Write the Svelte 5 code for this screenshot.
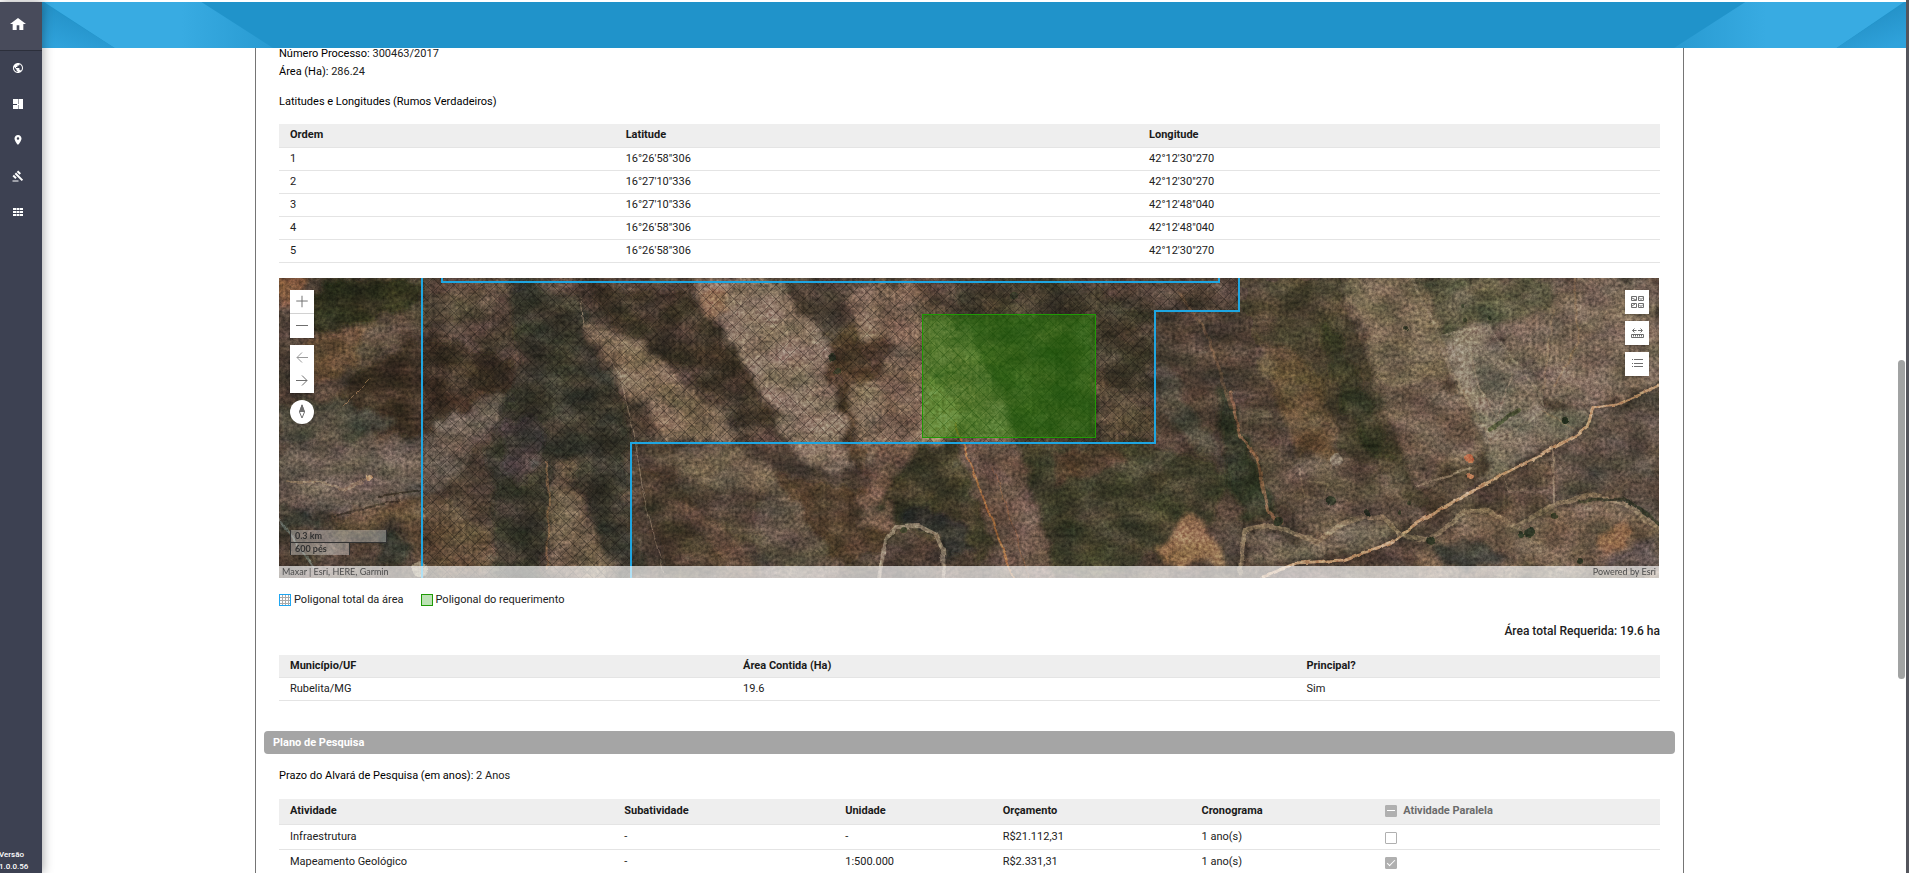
<script>
  const menu = [
    { name: 'Mapa', d: 'M12 2C6.48 2 2 6.48 2 12s4.48 10 10 10 10-4.480 10-10S17.520 2 12 2zm-1 17.930c-3.950-.49-7-3.850-7-7.930 0-.62.08-1.210.21-1.790L9 15v1c0 1.100.9 2 2 2v1.930zm6.900-2.540c-.26-.81-1-1.390-1.900-1.390h-1v-3c0-.55-.45-1-1-1H8v-2h2c.55 0 1-.45 1-1V7h2c1.100 0 2-.9 2-2v-.41c2.930 1.190 5 4.060 5 7.410 0 2.080-.8 3.970-2.100 5.390z' },
    { name: 'Painel', d: 'M2 2h11v10H2zM2 14h11v8H2zM14 2h8v20h-8zM10 12h4v2h-4z' },
    { name: 'Localização', d: 'M12 2C8.13 2 5 5.13 5 9c0 5.250 7 13 7 13s7-7.750 7-13c0-3.870-3.130-7-7-7zm0 9.500a2.500 2.500 0 010-5 2.500 2.500 0 010 5z' },
    { name: 'Leilão', d: 'M1 21h12v2H1zM5.245 8.070l2.830-2.827 14.140 14.142-2.828 2.828zM12.317 1l5.657 5.656-2.830 2.830-5.654-5.660zM3.825 9.485l5.657 5.657-2.828 2.828-5.657-5.657z' },
    { name: 'Aplicações', d: 'M2 4h6v4H2zM9 4h6v4H9zM16 4h6v4h-6zM2 10h6v4H2zM9 10h6v4H9zM16 10h6v4h-6zM2 16h6v4H2zM9 16h6v4H9zM16 16h6v4h-6z' }
  ];
  const coords = [
    ['1', '16°26\'58"306', '42°12\'30"270'],
    ['2', '16°27\'10"336', '42°12\'30"270'],
    ['3', '16°27\'10"336', '42°12\'48"040'],
    ['4', '16°26\'58"306', '42°12\'48"040'],
    ['5', '16°26\'58"306', '42°12\'30"270']
  ];
  const activities = [
    { name: 'Infraestrutura', sub: '-', unit: '-', cost: 'R$21.112,31', time: '1 ano(s)', parallel: false },
    { name: 'Mapeamento Geológico', sub: '-', unit: '1:500.000', cost: 'R$2.331,31', time: '1 ano(s)', parallel: true }
  ];
  // Land cover patches: [points, fill, opacity]
  const land = [
    ['0,0 30,0 8,32 0,30', '#7a5238', 1],
    ['40,0 150,0 140,30 80,50 50,70 30,40', '#2f2d1c', 1],
    ['60,50 140,28 200,0 260,0 200,30 120,62 70,70', '#5c4c3d', 0.9],
    ['30,60 90,45 80,80 55,105 20,110', '#644b34', 0.9],
    ['75,95 150,60 230,80 240,110 170,140 140,160 80,150 60,120', '#382c22', 0.9],
    ['0,130 60,120 120,145 60,170 0,168', '#4e483a', 1],
    ['0,172 60,165 140,160 220,110 235,125 200,165 180,200 150,215 110,225 60,235 0,225', '#6b5e52', 0.85],
    ['0,225 30,225 45,255 20,255 0,250', '#3a3a32', 1],
    ['50,240 150,215 180,230 210,260 205,300 150,300 120,240 60,260', '#5f4a35', 0.85],
    ['100,258 115,255 135,265 132,290 95,290', '#30322a', 1],
    ['230,0 300,20 310,60 350,130 345,220 370,300 330,300 305,210 280,185 260,300 210,300 215,230 205,170 225,130 240,80', '#38352c', 0.95],
    ['225,140 265,145 260,190 240,210 225,190', '#443c3e', 0.6],
    ['305,42 350,62 390,88 405,110 440,130 462,150 455,165 400,164 370,140 345,110 325,75', '#79654f', 1],
    ['272,185 290,186 300,215 312,245 335,290 335,300 268,300 270,230', '#6e5c48', 0.9],
    ['310,10 400,10 430,40 470,90 490,140 465,148 400,88 340,55', '#3e3226', 1],
    ['410,0 480,0 500,10 540,50 550,80 565,110 562,170 590,190 545,196 520,180 500,140 480,110 455,60 430,35', '#8a7564', 0.95],
    ['418,10 445,10 450,35 430,40', '#936f57', 1],
    ['570,10 645,5 660,30 705,75 725,140 740,165 640,165 600,190 590,165 600,110 580,70', '#7a6252', 0.95],
    ['545,60 570,55 610,60 605,95 580,115 570,150 600,190 593,205 572,180 562,130 550,100', '#493728', 0.95],
    ['500,0 560,0 570,20 545,60 520,30', '#4a3c30', 1],
    ['572,105 603,108 600,150 592,190 582,170 574,135', '#806a57', 0.9],
    ['600,170 640,165 615,200 602,220 585,210', '#6b5142', 0.9],
    ['395,178 410,170 440,170 480,180 505,195 480,215 440,205 400,195', '#7b6955', 0.7],
    ['355,185 395,200 420,230 460,260 480,300 395,300 370,240', '#45382a', 1],
    ['400,225 430,240 470,270 480,300 440,280 420,250', '#7b614a', 0.6],
    ['490,190 520,200 590,210 600,230 620,250 600,275 560,285 530,250 500,220', '#4d3b2b', 1],
    ['491,200 520,230 560,290 560,300 480,300 480,230', '#5c5044', 0.9],
    ['575,220 600,215 615,248 600,258 588,245', '#826450', 0.8],
    ['640,165 680,165 715,270 700,290 660,260 620,250 600,225', '#3c3728', 1],
    ['620,240 640,230 665,235 685,250 695,275 670,280 660,258 635,248', '#292c28', 1],
    ['676,165 735,162 750,200 775,290 778,300 728,300', '#655042', 1],
    ['646,100 670,115 685,155 660,165 644,162', '#a58b6a', 0.9],
    ['670,0 780,0 876,40 876,165 735,165 720,110 690,60', '#40372a', 0.9],
    ['740,165 876,165 960,200 930,240 880,280 800,300 778,300 755,210', '#403e29', 1],
    ['770,175 830,165 850,180 800,200 775,205', '#543a2a', 0.7],
    ['817,100 850,120 875,135 870,160 817,160', '#5d4a3a', 0.8],
    ['877,83 900,95 905,120 940,170 955,200 920,170 895,140 877,130', '#4d4638', 0.9],
    ['877,268 908,234 925,245 950,285 885,283', '#94704f', 1],
    ['960,0 1062,0 1080,60 1110,130 1135,205 1150,235 1110,225 1060,160 1010,130 975,70', '#48412d', 1],
    ['978,60 1010,70 1040,100 1050,140 1060,175 1020,180 1000,130', '#634d33', 0.8],
    ['1040,40 1060,50 1085,110 1115,180 1095,180 1060,120', '#33331f', 0.9],
    ['940,110 955,120 985,190 1000,240 960,240 951,200 940,150', '#2e3021', 1],
    ['951,120 980,130 1010,190 1055,175 1110,200 1145,240 1100,262 1040,255 1010,240 985,200', '#5e4f41', 1],
    ['1064,0 1132,0 1165,60 1175,110 1210,165 1215,170 1140,208 1111,132 1084,62', '#76664f', 1],
    ['1100,110 1170,100 1205,155 1140,205', '#665444', 0.8],
    ['1135,0 1275,0 1273,32 1205,47 1165,55 1150,30', '#59543d', 0.95],
    ['1165,58 1208,47 1262,118 1265,135 1215,165 1185,125', '#827563', 1],
    ['1190,75 1232,90 1255,130 1215,140 1195,105', '#6b6251', 1],
    ['1270,0 1380,0 1380,105 1315,128 1262,120 1212,48 1273,32', '#746453', 1],
    ['1264,132 1314,130 1308,149 1200,205 1200,180', '#746959', 1],
    ['1140,208 1215,172 1200,205 1148,240', '#4c3c2f', 1],
    ['1314,135 1380,110 1380,250 1330,225 1300,215 1275,230 1275,172', '#584b40', 1],
    ['1225,200 1272,178 1274,225 1235,245', '#5f4d3c', 1],
    ['970,255 1040,265 1085,240 1115,258 1060,278 1000,285 965,285', '#6d5f50', 1],
    ['1155,262 1195,235 1240,245 1280,230 1340,218 1380,250 1380,300 1120,300', '#6d5a47', 1],
    ['1160,270 1185,262 1220,270 1235,288 1160,288', '#3e3b30', 1],
    ['1318,252 1348,250 1345,268 1320,276', '#8d6547', 1],
    ['1330,280 1380,255 1380,290 1320,290', '#574a44', 1]
  ];
  // Tracks, creeks and field edges: [path, colour, width, opacity]
  const tracks = [
    ['M984 299L1018 285 1064 282 1111 265 1138 245 1191 214 1271 172 1300 156 1308 149 1314 130 1338 127 1380 107', '#bd9670', 3, 1],
    ['M961 295L966 252 990 247 1038 264 1066 244 1085 238 1105 240 1121 256 1148 262 1168 250 1186 233 1208 232 1238 249 1271 229 1310 217 1345 225 1378 249', '#927b60', 5, 0.75],
    ['M676 145L691 185 712 240 735 300', '#ad7243', 2, 0.9],
    ['M714 190L735 250 750 300', '#8f5f42', 1, 0.7],
    ['M600 300L606 262 617 249 640 248 656 256 664 272 665 300', '#988770', 4, 0.8],
    ['M302 20L305 48 340 95 355 155 365 220 385 295', '#8a7560', 1, 0.8],
    ['M951 115L960 155 978 180 990 235 1003 245', '#97694a', 3, 0.7],
    ['M1132 0L1155 45 1170 90 1205 150 1212 162', '#8c7b64', 3, 0.7],
    ['M1163 58L1208 47 1262 118 1266 132 1218 164', '#8c7d6a', 3, 0.7],
    ['M1190 70L1200 110 1218 140 1234 95', '#8e7e69', 2, 0.8],
    ['M1295 0L1300 65 1275 108', '#8b7156', 2, 0.7],
    ['M1275 32L1264 110 M1264 132L1293 150', '#927b61', 2, 0.6],
    ['M1138 208L1192 190 M1274 170L1275 224', '#9c876d', 2, 0.6],
    ['M1225 200L1230 213 1270 213', '#907b62', 1, 0.7],
    ['M60 212L90 200 M8 204L40 204 64 212 84 205', '#9c8468', 2, 0.6],
    ['M64 128L90 102', '#9c7854', 1, 0.7],
    ['M1020 190L1025 218 1045 222 1048 205 1030 203', '#7b6853', 2, 0.8],
    ['M900 15L925 50 940 90 952 130', '#8a6545', 3, 0.4],
    ['M0 240L10 255 35 290', '#7c8079', 2, 0.7],
    ['M267 185L270 220 268 290', '#8e6846', 2, 0.6],
    ['M100 218L143 212 M55 238L120 222', '#332c20', 2, 0.8],
    ['M1210 152L1240 132', '#3c4424', 4, 0.7],
    ['M1300 223L1345 221 1362 232 1380 245', '#333426', 3, 0.9]
  ];
  const clumps = [[1251, 255, 5], [1242, 256, 3], [1275, 238, 3], [1301, 283, 3], [1152, 263, 5], [1089, 235, 3], [1052, 223, 4], [1286, 142, 3], [1186, 42, 2], [1184, 28, 2], [1210, 40, 2], [1126, 50, 2], [1120, 235, 2], [1130, 225, 2], [1000, 243, 4], [553, 80, 4], [558, 93, 3], [625, 252, 3], [735, 18, 4]];
</script>

<div class="shell">
  <nav class="sidebar" aria-label="Principal">
    <a class="home" href="#inicio" aria-label="Início">
      <svg viewBox="0 0 24 24"><path d="M10 21v-7h4v7h6v-9h4L12 3 0 12h4v9z" /></svg>
    </a>
    <div class="menu">
      {#each menu as item}
        <a href="#menu" aria-label={item.name}><svg viewBox="0 0 24 24"><path d={item.d} /></svg></a>
      {/each}
    </div>
    <div class="version">Versão<br />1.0.0.56</div>
  </nav>

  <div class="main">
    <header>
      <svg class="stripe" viewBox="0 0 230 46" preserveAspectRatio="none" aria-hidden="true">
        <defs>
          <linearGradient id="fold-l" x1="0.7" y1="0.3" x2="0.3" y2="1"><stop offset="0" stop-color="#2390c6" /><stop offset="1" stop-color="#2fa2db" /></linearGradient>
          <linearGradient id="band-l"><stop offset="0.6" stop-color="#38abe2" /><stop offset="1" stop-color="#289ad1" /></linearGradient>
        </defs>
        <path d="M2 0H158L229 46H72z" fill="url(#band-l)" />
        <path d="M0 0L72 46H0z" fill="url(#fold-l)" />
      </svg>
      <svg class="stripe" viewBox="0 0 234 46" preserveAspectRatio="none" aria-hidden="true">
        <defs>
          <linearGradient id="fold-r" x1="0.3" y1="0.3" x2="0.7" y2="1"><stop offset="0" stop-color="#2390c6" /><stop offset="1" stop-color="#2fa2db" /></linearGradient>
          <linearGradient id="band-r"><stop offset="0" stop-color="#289ad1" /><stop offset="0.4" stop-color="#38abe2" /></linearGradient>
        </defs>
        <path d="M72 0H232L164 46H0z" fill="url(#band-r)" />
        <path d="M234 0L164 46H234z" fill="url(#fold-r)" />
      </svg>
    </header>

    <div class="body">
      <main>
        <article>
          <div class="facts">
            <p><b>Número Processo:</b> 300463/2017</p>
            <p><b>Área (Ha):</b> 286.24</p>
          </div>
          <h2>Latitudes e Longitudes (Rumos Verdadeiros)</h2>

          <table class="coords">
            <thead><tr><th>Ordem</th><th>Latitude</th><th>Longitude</th></tr></thead>
            <tbody>
              {#each coords as row}
                <tr>{#each row as cell}<td>{cell}</td>{/each}</tr>
              {/each}
            </tbody>
          </table>

          <div class="map">
            <svg class="ground" viewBox="0 0 1380 300" preserveAspectRatio="xMidYMid slice" aria-hidden="true">
              <defs>
                <filter id="rough" x="0" y="0" width="100%" height="100%">
                  <feTurbulence type="fractalNoise" baseFrequency="0.05" numOctaves="5" seed="4" />
                  <feDisplacementMap in="SourceGraphic" scale="26" xChannelSelector="R" yChannelSelector="G" result="d" />
                  <feGaussianBlur in="d" stdDeviation="2" />
                </filter>
                <filter id="wobble" x="0" y="0" width="100%" height="100%">
                  <feTurbulence type="fractalNoise" baseFrequency="0.08" numOctaves="2" seed="7" />
                  <feDisplacementMap in="SourceGraphic" scale="5" xChannelSelector="R" yChannelSelector="G" result="d" />
                  <feGaussianBlur in="d" stdDeviation="0.5" />
                </filter>
                <filter id="grain" x="0" y="0" width="100%" height="100%" color-interpolation-filters="sRGB">
                  <feTurbulence type="fractalNoise" baseFrequency="0.3" numOctaves="3" seed="11" />
                  <feColorMatrix values="1.100 0.500 0 0 -0.280  1.100 0.500 0 0 -0.280  1.100 0.500 0 0 -0.280  0 0 0 0 1" />
                </filter>
                <filter id="tone" x="0" y="0" width="100%" height="100%" color-interpolation-filters="sRGB">
                  <feTurbulence type="fractalNoise" baseFrequency="0.030 0.045" numOctaves="5" seed="23" />
                  <feColorMatrix values="1.500 0 0 0 -0.220  1.200 0.300 0 0 -0.220  1.100 0.100 0.300 0 -0.220  0 0 0 0 1" />
                </filter>
                <pattern id="hatch" width="14" height="14" patternUnits="userSpaceOnUse">
                  <path d="M0 0L14 14M14 0L0 14" stroke="#15130f" stroke-width="1" />
                </pattern>
              </defs>
              <rect width="1380" height="300" fill="#4b3e31" />
              <g filter="url(#rough)">
                <rect x="-20" y="-20" width="1420" height="340" fill="#4b3e31" />
                {#each land as [points, fill, opacity]}
                  <polygon {points} {fill} {opacity} />
                {/each}
              </g>
              <g filter="url(#wobble)" fill="none" stroke-linejoin="round" stroke-linecap="round">
                {#each tracks as [d, stroke, width, opacity]}
                  <path {d} {stroke} stroke-width={width} {opacity} />
                {/each}
                {#each clumps as [cx, cy, r]}
                  <circle {cx} {cy} {r} fill="#2d3320" />
                {/each}
                <circle cx="1190" cy="180" r="4" fill="#b5653f" />
                <circle cx="1191" cy="198" r="3" fill="#b5704c" />
                <circle cx="141" cy="291" r="8" fill="#a8977c" opacity="0.8" />
                <circle cx="90" cy="199" r="3" fill="#b8946c" />
                <circle cx="1057" cy="182" r="6" fill="#7a6c5c" />
              </g>
              <rect class="tone" width="1380" height="300" filter="url(#tone)" />
              <rect class="grain" width="1380" height="300" filter="url(#grain)" />
              <path d="M143.500 0H163V4H940V0H960.500V33H876V165H352.500V300H143.500z" fill="url(#hatch)" opacity="0.32" />
              <path d="M143 -2V302M163 -2V4H940V-2M960 -2V33H876V165H352V302" fill="none" stroke="#1ea6e2" stroke-width="2" />
              <rect x="643.500" y="36.500" width="173" height="123" fill="#1f8c00" fill-opacity="0.45" stroke="#1f9a06" />
            </svg>

            <div class="tools left">
              <div class="group">
                <button class="zoom-in" aria-label="Aproximar"><svg viewBox="0 0 24 24"><path d="M6 11.500H18M12 6V18" /></svg></button>
                <button aria-label="Afastar"><svg viewBox="0 0 24 24"><path d="M6 11.500H18" /></svg></button>
              </div>
              <div class="group">
                <button class="dim" aria-label="Extensão anterior"><svg viewBox="0 0 24 24"><path d="M18 12.500H7M12 7.500L7 12.500L12 17.500" /></svg></button>
                <button aria-label="Próxima extensão"><svg viewBox="0 0 24 24"><path d="M6 11.500H17M12 6.500L17 11.500L12 16.500" /></svg></button>
              </div>
              <button class="round" aria-label="Norte"><svg viewBox="0 0 24 24"><path d="M12 5L14.500 12 12 18 9.500 12z" /><path d="M12 4L15 12H9z" fill="#6e6e6e" stroke="none" /></svg></button>
            </div>

            <div class="tools right">
              <button aria-label="Mapas base"><svg viewBox="0 0 24 24"><path d="M6.500 6.500h5v4h-5zM13.500 6.500h5v4h-5zM6.500 13.500h5v4h-5zM13.500 13.500h5v4h-5zM7 8l4 2M14 7.500l2 2 2-2M7 16l3-2M14.500 15l1.500 1.500 2-2" /></svg></button>
              <button aria-label="Medir"><svg viewBox="0 0 24 24"><path d="M6.500 13.500h12v3h-12zM8.500 14v1.500M10.500 14v1.500M12.500 14v1.500M14.500 14v1.500M16.500 14v1.500M7.500 9.500h4M9.500 7.500l-2 2 2 2M13 9.500h4M15.500 7.500l2 2-2 2" /></svg></button>
              <button aria-label="Legenda"><svg viewBox="0 0 24 24"><path d="M9 7.500h9M9 11.500h9M9 14.500h9M7 7.500h1M7 11.500h1M7 14.500h1" /></svg></button>
            </div>

            <div class="scale"><span class="km">0.3 km</span><span class="ft">600 pés</span></div>
            <div class="credits"><span>Maxar | Esri, HERE, Garmin</span><span>Powered by Esri</span></div>
          </div>

          <div class="legend">
            <span><i class="grid"></i>Poligonal total da área</span>
            <span><i class="solid"></i>Poligonal do requerimento</span>
          </div>

          <p class="total">Área total Requerida: 19.6 ha</p>

          <table class="cities">
            <thead><tr><th>Município/UF</th><th>Área Contida (Ha)</th><th>Principal?</th></tr></thead>
            <tbody><tr><td>Rubelita/MG</td><td>19.6</td><td>Sim</td></tr></tbody>
          </table>

          <h3>Plano de Pesquisa</h3>
          <p class="term"><b>Prazo do Alvará de Pesquisa (em anos):</b> 2 Anos</p>

          <table class="plan">
            <thead>
              <tr>
                <th>Atividade</th><th>Subatividade</th><th>Unidade</th><th>Orçamento</th><th>Cronograma</th>
                <th><label><input type="checkbox" indeterminate={true} disabled />Atividade Paralela</label></th>
              </tr>
            </thead>
            <tbody>
              {#each activities as a}
                <tr>
                  <td>{a.name}</td><td>{a.sub}</td><td>{a.unit}</td><td>{a.cost}</td><td>{a.time}</td>
                  <td><label><input type="checkbox" checked={a.parallel} disabled aria-label="Atividade paralela" /></label></td>
                </tr>
              {/each}
            </tbody>
          </table>
        </article>
      </main>
      <div class="scrollbar"><div class="thumb"></div></div>
    </div>
  </div>
  <div class="edge"></div>
</div>

<style>
  :global(body) { margin: 0; background: #fff; }
  .shell {
    display: flex; height: 100vh; padding-top: 2px; box-sizing: border-box; overflow: hidden;
    font: 11px/18px Roboto, sans-serif; color: #212121;
  }
  .sidebar {
    width: 42px; flex: none; display: flex; flex-direction: column; z-index: 1;
    background: #3d4152; box-shadow: 1px 0 10px rgba(0, 0, 0, 0.35);
  }
  .sidebar a { display: flex; align-items: center; justify-content: center; padding-right: 6px; }
  .sidebar svg { width: 12px; height: 12px; fill: #fff; }
  .home { height: 49px; box-sizing: border-box; background: #484b5b; border-bottom: 1px solid #2c2f3b; padding-bottom: 4px; }
  .sidebar .home svg { width: 16px; height: 16px; }
  .menu { margin-top: -1px; }
  .menu a { height: 36px; }
  .version { margin: auto 0 0 -1px; font-size: 8px; line-height: 12px; font-weight: 500; color: #fff; }
  .main { flex: 1; min-width: 0; display: flex; flex-direction: column; }
  header { flex: none; height: 46px; display: flex; justify-content: space-between; background: #2093ca; }
  .stripe { height: 46px; width: 232px; }
  .body { flex: 1; min-height: 0; display: flex; overflow: hidden; }
  main { flex: 1; min-width: 0; padding: 0 213px; overflow: hidden; }
  article { min-height: 100%; padding: 0 23px; margin-top: -3px; border: solid #757575; border-width: 0 1px; }
  .scrollbar { width: 9px; display: flex; flex-direction: column; }
  .scrollbar::before { content: ''; flex: 312; }
  .scrollbar::after { content: ''; flex: 194; }
  .thumb { flex: 319; width: 7px; margin-left: 1px; border-radius: 4px; background: #a1a3a3; }
  .edge { width: 3px; margin-top: -2px; background: #54555c; }

  p, h2, h3 { margin: 0; }
  b, h2 { font-weight: 400; color: #000; }
  h2 { font-size: 11px; margin: 12px 0 13px; }

  table { width: 100%; table-layout: fixed; border-collapse: separate; border-spacing: 0; }
  th, td { box-sizing: border-box; height: 23px; padding: 0 0 1px; text-align: left; line-height: 16px; border-bottom: 1px solid #e4e4e4; white-space: nowrap; vertical-align: middle; }
  th:first-child, td:first-child { padding-left: 11px; }
  th { background: #eee; font-weight: 700; color: #1a1a1a; }
  .coords th, .plan th { padding-bottom: 2px; }
  .coords th { height: 24px; }
  .coords th:nth-child(1) { width: 25.1%; }
  .coords th:nth-child(2) { width: 37.9%; }
  .cities th:nth-child(1) { width: 33.6%; }
  .cities th:nth-child(2) { width: 40.8%; }
  .plan th { height: 26px; }
  .plan td { height: 25px; }
  .plan th:nth-child(1) { width: 25%; }
  .plan th:nth-child(2) { width: 16%; }
  .plan th:nth-child(3) { width: 11.4%; }
  .plan th:nth-child(4) { width: 14.4%; }
  .plan th:nth-child(5) { width: 13.3%; }

  label { display: flex; align-items: center; gap: 6px; color: #6b6b6b; }
  input {
    appearance: none; width: 12px; height: 12px; margin: 0; display: grid; place-items: center;
    border: 1px solid #b0b0b0; border-radius: 1px; background: #fff;
  }
  input:checked, input:indeterminate { background: #b0b0b0; }
  input:indeterminate::after { content: ''; width: 8px; height: 1px; background: #fff; }
  input:checked::after { content: ''; width: 8px; height: 4px; margin-bottom: 3px; border: solid #fff; border-width: 0 0 1px 1px; box-sizing: border-box; rotate: -45deg; }
  td label { padding-top: 3px; }

  .map { position: relative; height: 300px; margin: 15px 1px 0 0; overflow: hidden; }
  .ground { display: block; width: 100%; height: 100%; }
  .tone { mix-blend-mode: soft-light; opacity: 0.45; }
  .grain { mix-blend-mode: overlay; opacity: 0.4; }
  .tools { position: absolute; top: 12px; display: flex; flex-direction: column; gap: 7px; }
  .left { left: 11px; }
  .right { right: 10px; }
  .group { display: flex; flex-direction: column; box-shadow: 0 1px 2px rgba(0, 0, 0, 0.3); }
  button { width: 24px; height: 24px; padding: 0; border: 0; background: #fff; display: block; }
  .right button, .round { box-shadow: 0 1px 2px rgba(0, 0, 0, 0.3); }
  .zoom-in { border-bottom: 1px solid #d2d2d2; }
  .round { border-radius: 50%; }
  button svg { display: block; width: 24px; height: 24px; fill: none; stroke: #6e6e6e; stroke-width: 1; }
  .zoom-in svg { height: 23px; }
  .dim svg { stroke: #999; }
  .scale {
    position: absolute; left: 11px; bottom: 23px; display: flex; flex-direction: column; align-items: flex-start;
    font: 700 9px/12px Lato, sans-serif; color: #323232;
  }
  .scale span { box-sizing: border-box; height: 12px; padding-left: 4px; background: rgba(255, 255, 255, 0.33); border: solid #323232; border-width: 0 1px; }
  .scale .km { width: 97px; height: 13px; border-bottom-width: 1px; }
  .scale .ft { width: 60px; }
  .credits {
    position: absolute; left: 0; right: 0; bottom: 0; height: 12px; padding: 0 3px; display: flex; justify-content: space-between;
    font: 9px/12px Lato, sans-serif; color: #4c4c4c; background: rgba(255, 255, 255, 0.66);
  }

  .legend { display: flex; gap: 17px; margin-top: 13px; }
  .legend span { display: flex; align-items: center; gap: 3px; }
  .legend i { width: 12px; height: 12px; box-sizing: border-box; border: 1px solid #1ea6f2; }
  .legend .grid { background: repeating-linear-gradient(90deg, transparent 0 2px, #aaa 2px 3px), repeating-linear-gradient(transparent 0 2px, #aaa 2px 3px); }
  .legend .solid { border-color: #1f9a06; background: #bce2b4; }
  .total { margin: 13px 0 15px; text-align: right; font-size: 12px; font-weight: 500; }
  h3 { margin: 30px -15px 13px; padding: 0 9px; height: 23px; line-height: 23px; font-size: 11px; font-weight: 700; color: #fff; background: #a5a5a5; border-radius: 4px; }
  .term { margin-bottom: 14px; }
</style>
